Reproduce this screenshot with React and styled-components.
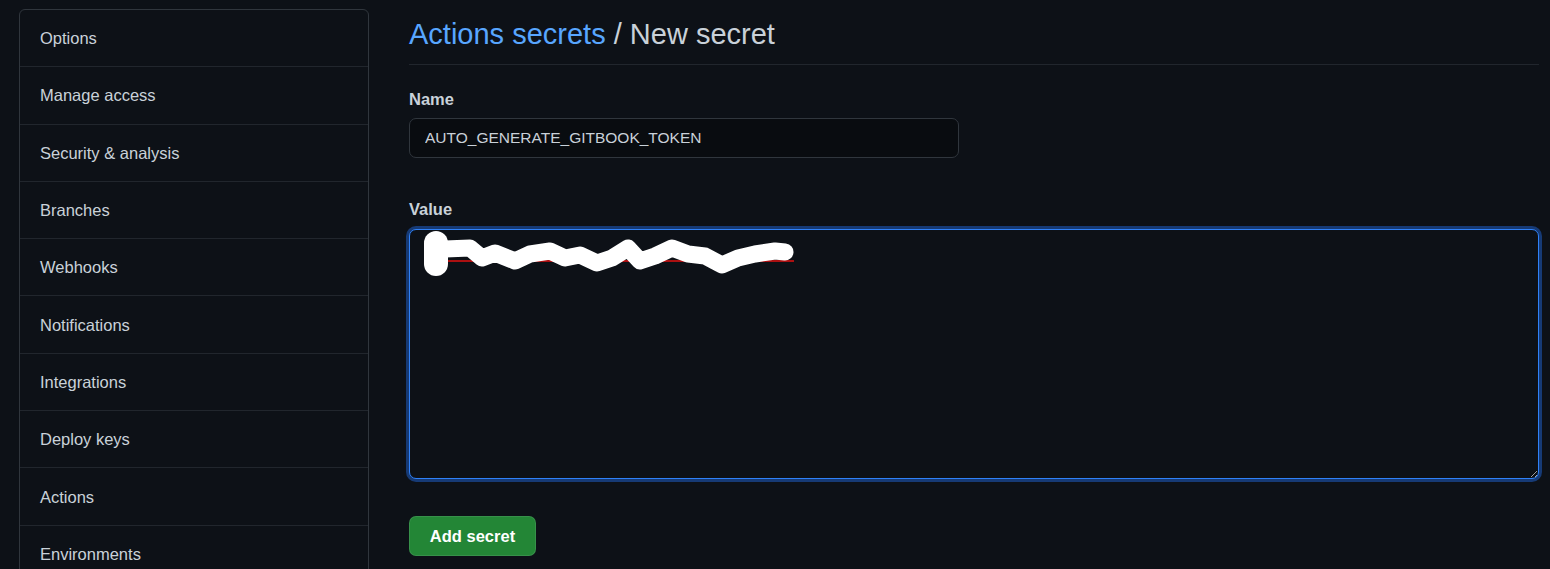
import React, { useState } from "react";
import styled, { createGlobalStyle } from "styled-components";

const GlobalStyle = createGlobalStyle`
  html, body {
    margin: 0;
    padding: 0;
    background: #0d1117;
    overflow: hidden;
    color-scheme: dark;
  }
  body {
    font-family: "Liberation Sans", Arial, sans-serif;
    color: #c9d1d9;
  }
`;

const Page = styled.div`
  display: flex;
  align-items: flex-start;
  gap: 40px;
  padding: 9px 11px 0 19px;
  height: 569px;
  box-sizing: border-box;
`;

const Menu = styled.nav`
  flex: 0 0 350px;
  box-sizing: border-box;
  border: 1px solid #30363d;
  border-radius: 6px;
  display: flex;
  flex-direction: column;
`;

const MenuItem = styled.a`
  display: flex;
  align-items: center;
  height: 56.3px;
  padding: 1px 0 0 20px;
  box-sizing: border-box;
  font-size: 16.5px;
  color: #c9d1d9;
  text-decoration: none;
  cursor: pointer;
  & + & {
    height: 57.3px;
    border-top: 1px solid #21262d;
  }
`;

const Main = styled.main`
  flex: 1;
  display: flex;
  flex-direction: column;
  align-items: flex-start;
`;

const Header = styled.div`
  align-self: stretch;
  padding: 6px 0 11px;
  border-bottom: 1px solid #21262d;
`;

const Title = styled.h2`
  margin: 0;
  font-size: 29px;
  font-weight: 400;
  line-height: 38px;
  color: #c9d1d9;
`;

const Crumb = styled.a`
  color: #58a6ff;
  text-decoration: none;
`;

const Label = styled.label`
  display: block;
  font-size: 16.5px;
  font-weight: 700;
  line-height: 22px;
  color: #c9d1d9;
  margin: ${p => p.$top}px 0 ${p => p.$bottom}px;
`;

const Input = styled.input`
  box-sizing: border-box;
  width: 550px;
  height: 40px;
  padding: 0 15px;
  background: #090c10;
  border: 1px solid #30363d;
  border-radius: 7px;
  color: #c9d1d9;
  font-family: "Liberation Sans", Arial, sans-serif;
  font-size: 15.5px;
  outline: none;
`;

const AreaWrap = styled.div`
  position: relative;
  align-self: stretch;
`;

const TextArea = styled.textarea`
  display: block;
  box-sizing: border-box;
  width: 100%;
  height: 250px;
  padding: 10px 15px;
  background: #0d1117;
  border: 1px solid #2f81f7;
  border-radius: 7px;
  box-shadow: 0 0 0 3px #163a75;
  color: #c9d1d9;
  font-family: "Liberation Sans", Arial, sans-serif;
  font-size: 15.5px;
  resize: vertical;
  outline: none;
`;

const Scribble = styled.svg`
  position: absolute;
  left: 0;
  top: 0;
  pointer-events: none;
`;

const Button = styled.button`
  margin-top: 37px;
  box-sizing: border-box;
  width: 127px;
  height: 40px;
  background: #238636;
  border: 1px solid rgba(240, 246, 252, 0.1);
  border-radius: 7px;
  color: #ffffff;
  font-family: "Liberation Sans", Arial, sans-serif;
  font-size: 16.5px;
  font-weight: 700;
  cursor: pointer;
`;

const items = [
  "Options",
  "Manage access",
  "Security & analysis",
  "Branches",
  "Webhooks",
  "Notifications",
  "Integrations",
  "Deploy keys",
  "Actions",
  "Environments",
];

// redaction stroke drawn over the secret value
const line =
  "36,20 61,19 73,29 86,24 106,32 121,25 141,22 156,29 171,26 188,34 203,29 219,19 231,32 246,27 263,19 279,25 296,27 313,36 329,29 346,25 366,22 376,23";

export default function App() {
  const [name, setName] = useState("AUTO_GENERATE_GITBOOK_TOKEN");
  const [value, setValue] = useState("");

  return (
    <>
      <GlobalStyle />
      <Page>
        <Menu>
          {items.map(item => (
            <MenuItem key={item}>{item}</MenuItem>
          ))}
        </Menu>
        <Main>
          <Header>
            <Title>
              <Crumb>Actions secrets</Crumb> / New secret
            </Title>
          </Header>
          <Label $top={23} $bottom={8}>Name</Label>
          <Input value={name} onChange={e => setName(e.target.value)} />
          <Label $top={40} $bottom={9}>Value</Label>
          <AreaWrap>
            <TextArea value={value} onChange={e => setValue(e.target.value)} />
            <Scribble width="400" height="60" viewBox="0 0 400 60">
              <path
                d="M16 32 l4 1.5 l4 -1.5 l4 1.5 l4 -1.5 L385 32"
                stroke="#e01010"
                strokeWidth="1.6"
                fill="none"
              />
              <line x1="27" y1="14" x2="27" y2="35" stroke="#fff" strokeWidth="24" strokeLinecap="round" />
              <polyline
                points={line}
                fill="none"
                stroke="#fff"
                strokeWidth="17"
                strokeLinecap="round"
                strokeLinejoin="round"
              />
            </Scribble>
          </AreaWrap>
          <Button>Add secret</Button>
        </Main>
      </Page>
    </>
  );
}
